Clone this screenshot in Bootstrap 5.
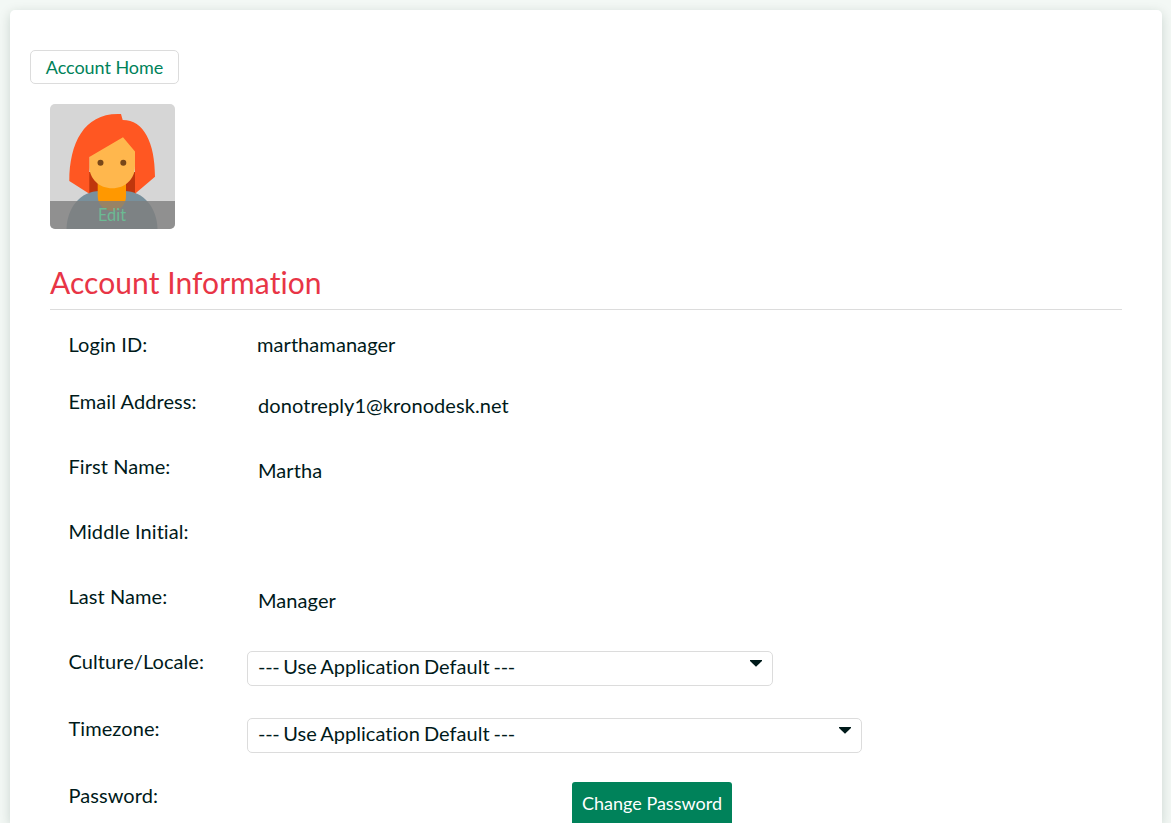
<!DOCTYPE html>
<html lang="en">
<head>
<meta charset="utf-8">
<meta name="viewport" content="width=device-width, initial-scale=1">
<title>Account Information</title>
<link href="https://cdn.jsdelivr.net/npm/bootstrap@5.3.0/dist/css/bootstrap.min.css" rel="stylesheet">
<style>
body{background:#f3f8f5;color:#001a1a;font-family:Lato,sans-serif;font-size:20px;line-height:26px;font-variant-ligatures:none;height:823px;overflow:hidden}
.panel{margin:10px 9px 0 10px;height:813px;overflow:clip;overflow-clip-margin:12px;padding:40px 40px 0 20px;border-radius:5px 5px 0 0;box-shadow:0 3px 12px rgba(0,40,30,.17)}
.btn-home{--bs-btn-color:#00825a;--bs-btn-border-color:#dcdcdc;--bs-btn-hover-color:#00825a;--bs-btn-hover-border-color:#bbb;width:149px;height:34px;padding:0;font-size:18px;letter-spacing:-.06px;line-height:33px;border-radius:5px}
.avatar{width:125px;height:125px;margin-top:20px;border-radius:5px}
.avatar-edit{height:28px;background:rgba(126,126,126,.8);color:#6cba93;font-size:16.4px;line-height:28px;padding-right:1px}
h1{margin:32px 0 0;height:49px;color:#e83546;font-size:30px;letter-spacing:.06px;line-height:42px;font-weight:400;border-bottom:1px solid #dcdcdc}
.fields{padding:21px 0 0 18.5px}
.field-row{display:grid;grid-template-columns:178.5px 1fr;height:65px;letter-spacing:.07px}
.row-first{height:57px}
.row-select{height:67px}
.row-last{height:41px}
.value{padding:4px 0 0 11px}
.row-first .value{padding:0 0 0 10px}
.picker{margin-top:3px;width:526px;height:35px;padding:1px 10px;border:1px solid #dcdcdc;border-radius:5px;letter-spacing:.04px;word-spacing:-1.2px}
.picker-wide{width:615px}
.picker svg{margin-top:7px}
.dashes{letter-spacing:-.3px}
.btn-change{--bs-btn-color:#fff;--bs-btn-bg:#00825a;--bs-btn-hover-color:#fff;--bs-btn-hover-bg:#006f4c;margin-left:325px;width:160px;height:44px;padding:0 0 2px;border:0;font-size:18px;line-height:42px;border-radius:3px}
</style>
</head>
<body>
<main class="panel bg-white">
  <a href="#" class="btn btn-home d-block">Account Home</a>
  <div class="ms-3 ps-1">
    <div class="avatar position-relative overflow-hidden">
      <svg class="d-block" width="125" height="125" viewBox="0 0 125 125" aria-hidden="true">
        <rect width="125" height="125" fill="#d6d6d6"/>
        <path d="M39 68h46.300v23H39z" fill="#bf360c"/>
        <path d="M16.500 125C17 104 30 87 50 87H74C94 87 107 104 107.500 125Z" fill="#78909c"/>
        <path d="M47.700 76H76V92C76 101 70 106.700 62 106.700S47.700 101 47.700 92Z" fill="#ff9800"/>
        <path d="M39.300 50L73 30L85 45V62C85 75 75 84.300 62.200 84.300S39.300 75 39.300 62Z" fill="#ffb74d"/>
        <path d="M71 10C35 8 19.300 38 19.300 77L39.300 89.700V53L73 33.300L85 47.500V89.700L105 72.700C105 39 94 16 72.700 16Z" fill="#ff5722"/>
        <circle cx="50.500" cy="58.700" r="3" fill="#784719"/><circle cx="73.300" cy="58.700" r="3" fill="#784719"/>
      </svg>
      <div class="avatar-edit position-absolute bottom-0 start-0 w-100 text-center">Edit</div>
    </div>
    <h1>Account Information</h1>
    <div class="fields">
      <div class="field-row row-first"><div>Login ID:</div><div class="value">marthamanager</div></div>
      <div class="field-row"><div>Email Address:</div><div class="value">donotreply1@kronodesk.net</div></div>
      <div class="field-row"><div>First Name:</div><div class="value">Martha</div></div>
      <div class="field-row"><div>Middle Initial:</div><div class="value"></div></div>
      <div class="field-row"><div>Last Name:</div><div class="value">Manager</div></div>
      <div class="field-row row-select"><div>Culture/Locale:</div>
        <div class="picker d-flex justify-content-between"><span><span class="dashes">---</span> Use Application Default <span class="dashes">---</span></span><svg width="12" height="7" viewBox="0 0 12 7"><path d="M0 0H12V1L6 6.700L0 1Z" fill="#001a1a"/></svg></div></div>
      <div class="field-row row-select"><div>Timezone:</div>
        <div class="picker picker-wide d-flex justify-content-between"><span><span class="dashes">---</span> Use Application Default <span class="dashes">---</span></span><svg width="12" height="7" viewBox="0 0 12 7"><path d="M0 0H12V1L6 6.700L0 1Z" fill="#001a1a"/></svg></div></div>
      <div class="field-row row-last"><div>Password:</div><button type="button" class="btn btn-change">Change Password</button></div>
    </div>
  </div>
</main>
<script src="https://cdn.jsdelivr.net/npm/bootstrap@5.3.0/dist/js/bootstrap.bundle.min.js"></script>
</body>
</html>
